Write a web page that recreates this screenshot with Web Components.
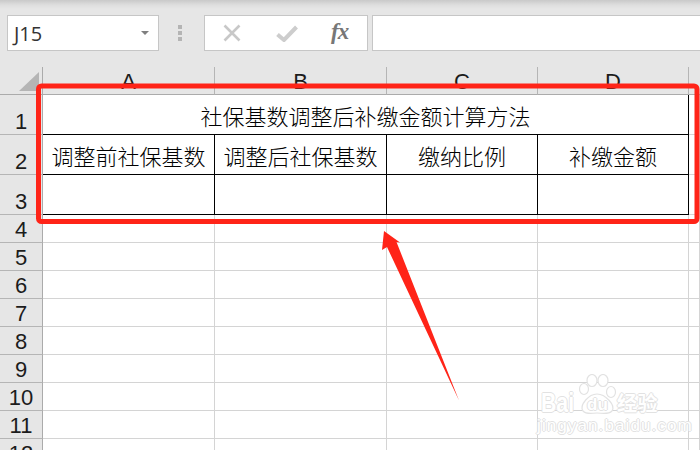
<!DOCTYPE html>
<html lang="zh"><head><meta charset="utf-8"><title>Sheet</title>
<style>
html,body{margin:0;height:100%;overflow:hidden;background:#e6e6e6}
body{width:700px;height:450px;position:relative;display:flex;flex-direction:column;font-family:"Liberation Sans","Noto Sans CJK SC",sans-serif}
</style></head><body>
<fx-bar></fx-bar>
<sheet-grid></sheet-grid>
<callout-mark></callout-mark>
<baidu-mark></baidu-mark>
<script>
class FxBar extends HTMLElement{
 constructor(){super();this.attachShadow({mode:'open'}).innerHTML=`<style>
 :host{display:flex;box-sizing:border-box;height:67px;padding:15px 0 16px 7px;align-items:stretch;background:linear-gradient(#c9c9c9 0,#dedede 5px,#e6e6e6 9px)}
 .box{box-sizing:border-box;background:#fff;border:1px solid #c6c6c6}
 .name{width:152px;display:flex;align-items:center;justify-content:space-between;padding:0 9px 0 6px;font:20px "Open Sans","Liberation Sans",sans-serif;color:#333}
 .caret{width:0;height:0;border:4px solid transparent;border-top:4px solid #7f7f7f;border-bottom:0;margin-top:-1px}
 .dots{width:45px;padding-right:3px;box-sizing:border-box;display:flex;flex-direction:column;align-items:center;justify-content:center;gap:2px}
 .dots i{width:4px;height:4px;background:#b4b4b4}
 .btns{width:164px;display:flex;align-items:center;position:relative}
 .btns svg{display:block}
 .fx{font:italic bold 23px "Liberation Serif",serif;color:#777;margin-left:33px;letter-spacing:-1px;line-height:1;margin-top:-3px}
 .input{flex:1;margin-left:4px;border-right:0}
 </style>
 <div class="box name"><span>J15</span><span class="caret"></span></div>
 <div class="dots"><i></i><i></i><i></i></div>
 <div class="box btns">
  <svg width="18" height="18" viewBox="0 0 18 18" style="margin-left:18px"><path d="M1.500 1.500L16.500 16.500M16.500 1.500L1.500 16.500" stroke="#c8c8c8" stroke-width="2.600" fill="none"/></svg>
  <svg width="22" height="17" viewBox="0 0 22 17" style="margin-left:35px"><path d="M1.500 9.500L8 15L20.500 2" stroke="#cdcdcd" stroke-width="4" fill="none"/></svg>
  <span class="fx">fx</span>
 </div>
 <div class="box input"></div>`;}
}
customElements.define('fx-bar',FxBar);

class SheetGrid extends HTMLElement{
 constructor(){super();
  const rows=[40,40,40,28,28,28,28,28,28,28,28,28,28];
  let h=`<div class="corner"><svg width="43" height="27" viewBox="0 0 43 27"><path d="M39 5V24H19Z" fill="#b5b5b5"/></svg></div>`;
  ['A','B','C','D',''].forEach((c,i)=>h+=`<div class="ch${i==4?' last':''}"><span>${c}</span></div>`);
  const titles=['调整前社保基数','调整后社保基数','缴纳比例','补缴金额'];
  rows.forEach((_,r)=>{
   h+=`<div class="rh"><span>${r+1}</span></div>`;
   if(r==0){h+=`<div class="c t b r" style="grid-column:2/6">社保基数调整后补缴金额计算方法</div><div class="c"></div>`;}
   else for(let c=0;c<5;c++){
    const black=r<3&&c<4;
    const txt=r==1&&c<4?titles[c]:'';
    h+=`<div class="c${black?' b r':''}${txt?' t':''}">${txt}</div>`;
   }
  });
  this.attachShadow({mode:'open'}).innerHTML=`<style>
  :host{display:grid;flex:1;overflow:hidden;grid-template-columns:43px 172px 172px 151px 151px 11px;grid-template-rows:28px ${rows.map(x=>x+'px').join(' ')};background:#fff;font:22px "Liberation Sans","Noto Sans CJK SC",sans-serif;color:#1c1c1c}
  .corner{background:#e6e6e6;border-right:1px solid #ababab;border-bottom:1px solid #ababab;box-sizing:border-box;overflow:hidden}
  .corner svg{display:block}
  .ch{box-sizing:border-box;background:#e6e6e6;border-right:1px solid #b5b5b5;border-bottom:1px solid #ababab;display:flex;justify-content:center;align-items:flex-end;line-height:24px;overflow:hidden}
  .ch.last{border-right:0}
  .rh{box-sizing:border-box;background:#e6e6e6;border-right:1px solid #ababab;border-bottom:1px solid #b5b5b5;display:flex;justify-content:center;align-items:flex-end;line-height:24px}
  .c{box-sizing:border-box;border-right:1px solid #d4d4d4;border-bottom:1px solid #d4d4d4}
  .c.b{border-bottom-color:#000}
  .c.r{border-right-color:#000}
  .t{display:flex;align-items:center;justify-content:center;font-family:"Noto Sans CJK SC",sans-serif;font-weight:300;color:#000}
  </style>${h}`;
 }
}
customElements.define('sheet-grid',SheetGrid);

class CalloutMark extends HTMLElement{
 constructor(){super();this.attachShadow({mode:'open'}).innerHTML=`<style>
 :host{position:absolute;left:0;top:0;width:700px;height:450px;pointer-events:none}
 svg{display:block}
 </style><svg width="700" height="450" viewBox="0 0 700 450">
 <rect x="38.500" y="86" width="658.500" height="135.500" rx="3" fill="none" stroke="#ff2418" stroke-width="5"/>
 <path d="M384 231L400 242.500L396.500 242L459 400.500L387 247L382 250Z" fill="#ff2418"/>
 </svg>`;}
}
customElements.define('callout-mark',CalloutMark);

class BaiduMark extends HTMLElement{
 constructor(){super();this.attachShadow({mode:'open'}).innerHTML=`<style>
 :host{position:absolute;left:536px;top:372px;width:146px;height:66px;pointer-events:none;color:#fff;font-family:"Liberation Sans","Noto Sans CJK SC",sans-serif;--o:#e2e2e2;--s:1px 0 0 var(--o),-1px 0 0 var(--o),0 1px 0 var(--o),0 -1px 0 var(--o)}
 span{position:absolute;white-space:nowrap;text-shadow:var(--s)}
 .top{left:5px;top:16px;font-size:28px;font-weight:bold;line-height:30px;transform:scaleX(.76);transform-origin:left center}
 .du{left:51px;top:24px;font-size:17px;font-weight:bold;line-height:18px}
 .cn{left:81px;top:19px;font-size:20px;font-weight:bold;line-height:24px;letter-spacing:.5px;font-family:"Noto Sans CJK SC",sans-serif}
 .sub{left:1px;top:46px;font-size:17px;line-height:16px;letter-spacing:1.100px}
 svg{position:absolute;left:42px;top:2px}
 </style>
 <svg width="40" height="41" viewBox="0 0 40 41" fill="#fff" stroke="#e2e2e2" stroke-width="1.200">
  <ellipse cx="14" cy="6.500" rx="5" ry="6"/><ellipse cx="25" cy="6.500" rx="5" ry="6"/><ellipse cx="6" cy="15" rx="4.500" ry="5.500"/><ellipse cx="33" cy="18" rx="4.500" ry="5.500"/>
  <path d="M19 20C27 20 38 31 34 37C30 41 24 39 19 39C14 39 9 41 5 37C1 31 11 20 19 20Z"/>
 </svg>
 <span class="top">Bai</span><span class="du">du</span><span class="cn">经验</span>
 <span class="sub">jingyan.baidu.com</span>`;}
}
customElements.define('baidu-mark',BaiduMark);
</script>
</body></html>
